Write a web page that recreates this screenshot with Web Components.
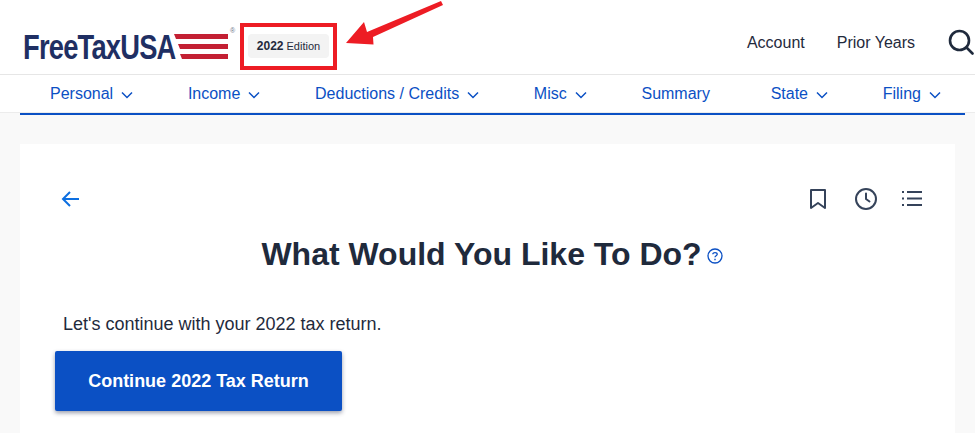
<!DOCTYPE html>
<html lang="en">
<head>
<meta charset="utf-8">
<title>FreeTaxUSA</title>
<style>
  html, body { margin: 0; height: 100%; overflow: hidden; }
  body { background: #f9f9f9; font: 16px "Liberation Sans", Arial, sans-serif; color: #1f2a3c; }
</style>
</head>
<body>
<site-header></site-header>
<site-nav>
  <nav-item menu>Personal</nav-item>
  <nav-item menu>Income</nav-item>
  <nav-item menu>Deductions / Credits</nav-item>
  <nav-item menu>Misc</nav-item>
  <nav-item class="summary">Summary</nav-item>
  <nav-item menu>State</nav-item>
  <nav-item menu>Filing</nav-item>
</site-nav>
<page-card>
  <card-tools></card-tools>
  <h1 slot="title">What Would You Like To Do?</h1>
  <span slot="text">Let's continue with your 2022 tax return.</span>
  <span slot="action">Continue 2022 Tax Return</span>
</page-card>

<script>
class SiteHeader extends HTMLElement {
  constructor() {
    super();
    this.attachShadow({ mode: "open" });
  }
  connectedCallback() {
    this.shadowRoot.innerHTML = `
    <style>
      :host { display: flex; align-items: center; height: 74px; padding: 0 0 0 24px; background: #fff; border-bottom: 1px solid #e6e6e6; position: relative; overflow: hidden; }
      .logo { display: flex; align-items: center; width: 224px; padding-top: 18px; box-sizing: border-box; height: 74px; position: relative; }
      .word { font: bold 35px/35px "Liberation Sans", Arial, sans-serif; color: #1f2f63; letter-spacing: -1px; transform: scaleX(.78); transform-origin: 0 50%; white-space: nowrap; width: 152px; margin-left: -1px; }
      .flag { width: 54px; height: 25px; flex: none; margin-left: -1px; }
      .reg { position: absolute; left: 206px; top: 27px; font: 7px/7px "Liberation Sans", Arial, sans-serif; color: #6a7488; }
      .badge { display: flex; align-items: center; justify-content: center; gap: 3px; height: 24px; width: 81px; margin-top: 18px; background: #f3f3f3; border-radius: 4px; font-size: 11px; color: #1f2a3c; }
      .badge b { font-size: 12px; }
      .links { display: flex; align-items: center; gap: 32px; margin-left: auto; font-size: 16px; padding-top: 10px; }
      .links span { position: relative; top: 1px; }
      .search { width: 26px; height: 26px; flex: none; margin: 0 1px 0 1px; display: block; }
      .mark { position: absolute; left: 240px; top: 23px; width: 97px; height: 47px; box-sizing: border-box; border: 4px solid #ed1c24; }
      .arrow { position: absolute; left: 340px; top: 0; }
    </style>
    <div class="logo">
      <span class="word">FreeTaxUSA</span>
      <svg class="flag" viewBox="0 0 54 25"><path fill="#c32033" d="M0 0h54v5H2zM4 10h50v5H6zM6 20h48v5H8z"/></svg>
      <span class="reg">®</span>
    </div>
    <div class="badge"><b>2022</b> Edition</div>
    <div class="links">
      <span>Account</span>
      <span>Prior Years</span>
      <svg class="search" viewBox="0 0 26 26" fill="none" stroke="#1f2a3c" stroke-width="2.600" stroke-linecap="round"><circle cx="11.500" cy="11.500" r="9.500"/><path d="M18.500 18.500L24.500 24.500"/></svg>
    </div>
    <div class="mark"></div>
    <svg class="arrow" width="110" height="50" viewBox="0 0 110 50"><path fill="#ed1c24" d="M6 43L24 22l3 10L101 1l2 4L33 37l.5 7.500z"/></svg>
    `;
  }
}

class SiteNav extends HTMLElement {
  constructor() {
    super();
    this.attachShadow({ mode: "open" });
  }
  connectedCallback() {
    this.shadowRoot.innerHTML = `
    <style>
      :host { display: block; }
      .bar { display: flex; justify-content: space-between; align-items: center; height: 38px; box-sizing: border-box; padding: 0 34px 0 50px; background: #fff; border-bottom: 1px solid #ececec; }
      .rule { height: 2px; margin: 0 10px 0 20px; background: #0b50c4; }
    </style>
    <div class="bar"><slot></slot></div>
    <div class="rule"></div>
    `;
  }
}

class NavItem extends HTMLElement {
  constructor() {
    super();
    this.attachShadow({ mode: "open" });
  }
  connectedCallback() {
    const chevron = this.hasAttribute("menu")
      ? `<svg width="12" height="8" viewBox="0 0 12 8" fill="none" stroke="#0b50c4" stroke-width="1.500"><path d="M1 1.500l5 5 5-5"/></svg>`
      : "";
    this.shadowRoot.innerHTML = `
    <style>
      :host { display: flex; align-items: center; gap: 8px; color: #0b50c4; font-size: 16px; white-space: nowrap; }
      :host(.summary) { margin-right: 6px; }
      svg { margin-top: 3px; }
    </style>
    <slot></slot>${chevron}
    `;
  }
}

class CardTools extends HTMLElement {
  constructor() {
    super();
    this.attachShadow({ mode: "open" });
  }
  connectedCallback() {
    this.shadowRoot.innerHTML = `
    <style>
      :host { display: flex; align-items: center; height: 24px; }
      .back { margin-right: auto; margin-left: 4px; }
      svg { display: block; }
      .gap { width: 24px; }
    </style>
    <svg class="back" width="24" height="24" viewBox="0 0 24 24" fill="none" stroke="#0d6fe0" stroke-width="2"><path d="M20 12H4.500M11 5l-7 7 7 7"/></svg>
    <svg width="24" height="24" viewBox="0 0 24 24" fill="none" stroke="#35435a" stroke-width="2" stroke-linejoin="round"><path d="M5 3h14v18l-7-5-7 5z"/></svg>
    <div class="gap"></div>
    <svg width="24" height="24" viewBox="0 0 24 24" fill="none" stroke="#35435a" stroke-width="2" stroke-linecap="round" stroke-linejoin="round"><circle cx="12" cy="12" r="10"/><path d="M12 6.500V12l3.500 2.500"/></svg>
    <div class="gap"></div>
    <svg width="24" height="24" viewBox="0 0 24 24" fill="none" stroke="#35435a" stroke-width="2"><path d="M5 5h15M5 11.500h15M5 18h15"/><path d="M0 5h2M0 11.500h2M0 18h2"/></svg>
    `;
  }
}

class PageCard extends HTMLElement {
  constructor() {
    super();
    this.attachShadow({ mode: "open" });
  }
  connectedCallback() {
    this.shadowRoot.innerHTML = `
    <style>
      :host { display: block; margin: 29px 20px 0; padding: 43px 29px 0 35px; height: 246px; background: #fff; }
      .title { display: flex; justify-content: center; align-items: center; gap: 5px; margin: 23px 0 0; padding-left: 3px; height: 40px; }
      ::slotted(h1) { margin: 0; font: bold 32px/40px "Liberation Sans", Arial, sans-serif; color: #1f2a3c; }
      .help { margin-top: 3px; }
      .text { margin: 38px 0 0 8px; font-size: 18px; line-height: 24px; color: #1f2a3c; }
      .button { display: flex; align-items: center; justify-content: center; width: 287px; height: 60px; margin-top: 15px; background: #0b50c4; border-radius: 2px; box-shadow: 0 2px 4px rgba(30,40,70,.45); color: #fff; font-weight: bold; font-size: 18px; }
    </style>
    <slot></slot>
    <div class="title">
      <slot name="title"></slot>
      <svg class="help" width="16" height="16" viewBox="0 0 16 16" fill="none" stroke="#0b50c4"><circle cx="8" cy="8" r="7" stroke-width="1.300"/><path d="M5.800 6.300C5.800 4 10.200 4 10.200 6.300 10.200 7.800 8 7.700 8 9.300" stroke-width="1.300"/><path d="M8 10.800v1.400" stroke-width="1.400"/></svg>
    </div>
    <div class="text"><slot name="text"></slot></div>
    <div class="button"><slot name="action"></slot></div>
    `;
  }
}

customElements.define("site-header", SiteHeader);
customElements.define("site-nav", SiteNav);
customElements.define("nav-item", NavItem);
customElements.define("card-tools", CardTools);
customElements.define("page-card", PageCard);
</script>
</body>
</html>
